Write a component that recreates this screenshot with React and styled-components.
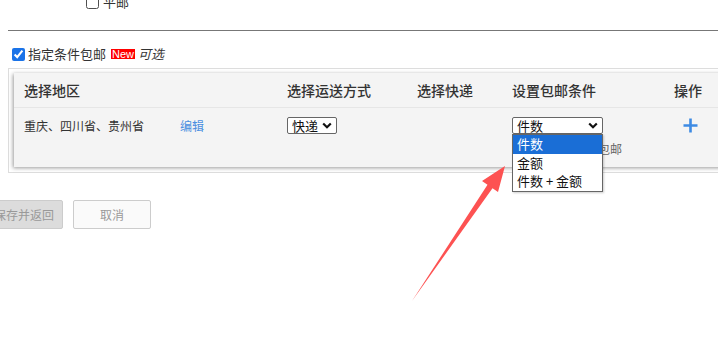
import React from "react";
import styled, { createGlobalStyle } from "styled-components";

const Global = createGlobalStyle`
  html, body { margin: 0; padding: 0; background: #fff; overflow: hidden; }
  body {
    width: 718px; height: 351px;
    font-family: "Noto Sans CJK SC", "Noto Sans", sans-serif;
    color: #333;
  }
  * { box-sizing: border-box; }
`;

const Page = styled.div`
  position: relative;
  width: 718px;
  height: 351px;
  overflow: hidden;
`;

const TopRow = styled.label`
  display: flex;
  align-items: center;
  gap: 4px;
  height: 20px;
  margin-top: -8px;
  padding-left: 86px;
  font-size: 13px;
  line-height: 20px;
`;

const Check = styled.input.attrs({ type: "checkbox" })`
  width: 13px;
  height: 13px;
  margin: 0;
  accent-color: #1a73e8;
`;

const Divider = styled.div`
  margin: 18px 0 0 8px;
  height: 1px;
  background: #777;
`;

const ConditionRow = styled.label`
  display: flex;
  align-items: center;
  height: 20px;
  margin-top: 13px;
  padding-left: 12px;
  font-size: 13px;
  line-height: 20px;
`;

const ConditionText = styled.span`
  margin-left: 3px;
`;

const NewBadge = styled.span`
  display: inline-block;
  margin-left: 5px;
  padding: 0 1px;
  height: 10px;
  line-height: 10px;
  font-family: "Liberation Sans", Arial, sans-serif;
  font-size: 11px;
  color: #fff;
  background: #f00;
`;

const Optional = styled.span`
  margin-left: 3px;
  font-style: italic;
`;

const OuterBox = styled.div`
  margin: 4px 0 0 8px;
  width: 780px;
  border: 1px solid #ddd;
  padding: 4px 5px 5px 5px;
`;

const Panel = styled.div`
  background: #f4f4f4;
  box-shadow: -1px 1px 4px rgba(0, 0, 0, 0.4);
`;

const Row = styled.div`
  display: grid;
  grid-template-columns: 263px 130px 95px 162px 1fr;
  padding-left: 10px;
  align-items: ${(p) => (p.$head ? "center" : "start")};
  height: ${(p) => (p.$head ? "35px" : "59px")};
  padding-top: ${(p) => (p.$head ? "0" : "9px")};
  border-bottom: ${(p) => (p.$head ? "1px solid #e6e6e6" : "none")};
`;

const HeadCell = styled.div`
  font-size: 14px;
  line-height: 20px;
  font-weight: 500;
  color: #333;
`;

const Cell = styled.div`
  position: relative;
  display: flex;
  align-items: ${(p) => (p.$column ? "flex-start" : "center")};
  flex-direction: ${(p) => (p.$column ? "column" : "row")};
  font-size: 12px;
  line-height: 17px;
`;

const Region = styled.span`
  width: 156px;
  color: #333;
`;

const EditLink = styled.a`
  color: #4a8ee0;
  text-decoration: none;
`;

const SelectBox = styled.div`
  display: flex;
  align-items: center;
  justify-content: space-between;
  width: ${(p) => p.$w}px;
  height: 17px;
  padding: 0 4px 0 4px;
  border: 1px solid #666;
  border-radius: 2px;
  background: #fff;
  font-size: 13px;
  line-height: 15px;
  color: #111;
`;

const OptionList = styled.ul`
  position: absolute;
  top: 17px;
  left: 0;
  z-index: 2;
  width: 91px;
  margin: 0;
  padding: 0;
  list-style: none;
  background: #fff;
  border: 1px solid #666;
  box-shadow: 1px 1px 2px rgba(0, 0, 0, 0.2);
`;

const Option = styled.li`
  height: 18.5px;
  padding-left: 4px;
  font-size: 13px;
  line-height: 18.5px;
  color: ${(p) => (p.$active ? "#fff" : "#111")};
  background: ${(p) => (p.$active ? "#1a6ed6" : "transparent")};
`;

const Note = styled.div`
  margin: 8px 0 0 2px;
  font-size: 12px;
  line-height: 14px;
  color: #666;
  white-space: nowrap;
`;

const PlusWrap = styled.div`
  margin-left: 9px;
  margin-top: 1px;
  display: flex;
`;

const Buttons = styled.div`
  display: flex;
  gap: 10px;
  margin: 27px 0 0 -15px;
`;

const Button = styled.button`
  width: 78px;
  height: 29px;
  padding: 0;
  border: 1px solid #ccc;
  border-radius: 2px;
  font-family: "Noto Sans CJK SC", sans-serif;
  font-size: 12px;
  color: #999;
  background: ${(p) => (p.$primary ? "#dcdcdc" : "#fafafa")};
`;

const ArrowSvg = styled.svg`
  position: absolute;
  left: 0;
  top: 0;
  pointer-events: none;
`;

const Chevron = () => (
  <svg width="10" height="7" viewBox="0 0 10 7">
    <path d="M1.2 1.5 L5 5.2 L8.8 1.5" fill="none" stroke="#111" strokeWidth="2.2" />
  </svg>
);

const Plus = () => (
  <svg width="15" height="15" viewBox="0 0 15 15">
    <path d="M7.5 0.5 V14.5 M0.5 7.5 H14.5" stroke="#3d8ae3" strokeWidth="2.6" />
  </svg>
);

export default function App() {
  return (
    <Page>
      <Global />
      <TopRow>
        <Check />
        <span>平邮</span>
      </TopRow>
      <Divider />
      <ConditionRow>
        <Check defaultChecked />
        <ConditionText>指定条件包邮</ConditionText>
        <NewBadge>New</NewBadge>
        <Optional>可选</Optional>
      </ConditionRow>
      <OuterBox>
        <Panel>
          <Row $head>
            <HeadCell>选择地区</HeadCell>
            <HeadCell>选择运送方式</HeadCell>
            <HeadCell>选择快递</HeadCell>
            <HeadCell>设置包邮条件</HeadCell>
            <HeadCell>操作</HeadCell>
          </Row>
          <Row>
            <Cell>
              <Region>重庆、四川省、贵州省</Region>
              <EditLink href="#">编辑</EditLink>
            </Cell>
            <Cell>
              <SelectBox $w={50}>
                <span>快递</span>
                <Chevron />
              </SelectBox>
            </Cell>
            <Cell />
            <Cell $column>
              <SelectBox $w={91}>
                <span>件数</span>
                <Chevron />
              </SelectBox>
              <OptionList>
                <Option $active>件数</Option>
                <Option>金额</Option>
                <Option>件数 + 金额</Option>
              </OptionList>
              <Note>满足所设条件即包邮</Note>
            </Cell>
            <Cell>
              <PlusWrap>
                <Plus />
              </PlusWrap>
            </Cell>
          </Row>
        </Panel>
      </OuterBox>
      <Buttons>
        <Button $primary>保存并返回</Button>
        <Button>取消</Button>
      </Buttons>
      <ArrowSvg width="718" height="351" viewBox="0 0 718 351">
        <polygon
          points="412,301 487.5,184.8 482,181 505,166 498,192 492.5,188.2"
          fill="#fd5252"
        />
      </ArrowSvg>
    </Page>
  );
}
